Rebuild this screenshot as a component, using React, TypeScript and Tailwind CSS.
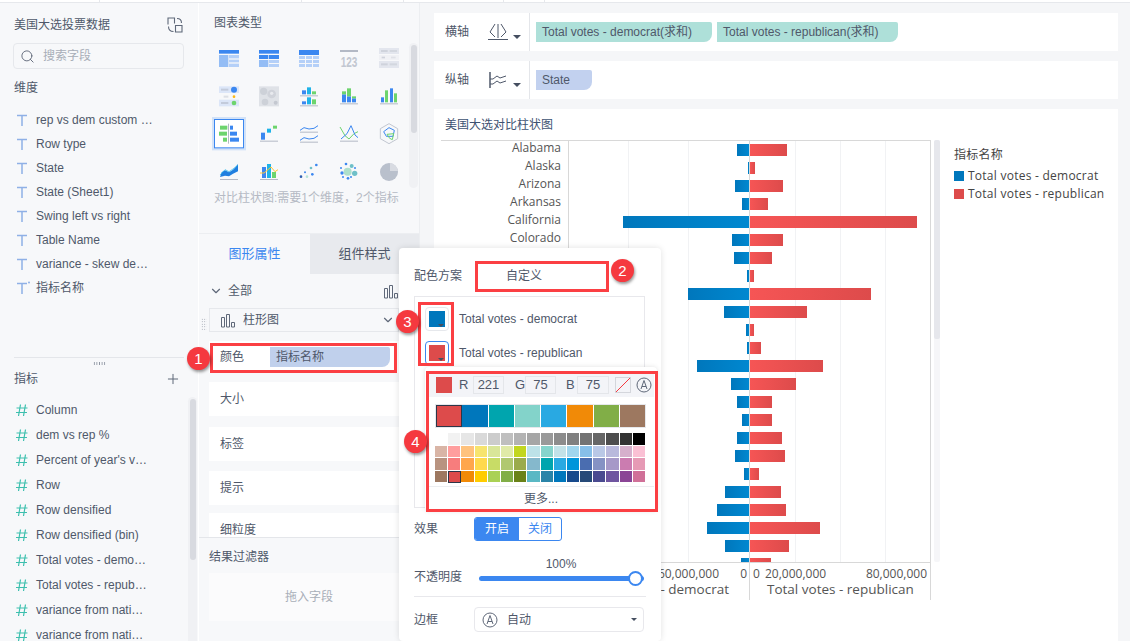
import { Search, Plus, ChevronDown } from 'lucide-react'

const dimensions = [
  'rep vs dem custom …',
  'Row type',
  'State',
  'State (Sheet1)',
  'Swing left vs right',
  'Table Name',
  'variance - skew de…',
  '指标名称',
]

const measures = [
  'Column',
  'dem vs rep %',
  "Percent of year's v…",
  'Row',
  'Row densified',
  'Row densified (bin)',
  'Total votes - demo…',
  'Total votes - repub…',
  'variance from nati…',
  'variance from nati…',
]

const states = ['Alabama', 'Alaska', 'Arizona', 'Arkansas', 'California', 'Colorado']

// left end / right end of each row, zero line sits at x=749
const bars = [
  [737, 787], [748, 755], [735, 783], [742, 768], [623, 917], [732, 783],
  [734, 772], [747, 754], [688, 871], [724, 807], [746, 754], [747, 761],
  [697, 823], [731, 796], [737, 772], [742, 772], [737, 782], [735, 785],
  [744, 759], [725, 781], [717, 786], [707, 820], [725, 789], [741, 771],
]

const bigSwatches = ['#dd4b4b', '#0077bc', '#00a5ae', '#83d3ca', '#29a9e2', '#f18a07', '#81ae47', '#9d7860']

const palette = [
  '#ffffff', '#f2f2f2', '#e6e6e6', '#d9d9d9', '#cccccc', '#bfbfbf', '#b3b3b3', '#a6a6a6', '#999999', '#8c8c8c', '#808080', '#737373', '#666666', '#4d4d4d', '#333333', '#000000',
  '#d9b5a6', '#ff9e9e', '#ffc27d', '#f7e46e', '#d9e699', '#e0eaa8', '#c2d61f', '#bde2e8', '#85d4cc', '#c2e2e8', '#a0d6ee', '#87bfe8', '#b9c8e6', '#b9b9dc', '#d6b0cc', '#fac0d4',
  '#b89380', '#f77d7d', '#ffa64d', '#ffd94d', '#c8dc66', '#b0c870', '#9bab4c', '#85b8cc', '#00a5ae', '#29a9e2', '#0095da', '#4a6db0', '#8592c4', '#a699c8', '#cb7cb0', '#e69ab5',
  '#9d7860', '#dd4b4b', '#f18a07', '#ffcc00', '#aad155', '#81ae47', '#6a8218', '#5ab8c4', '#2a84a8', '#0077bc', '#174a8c', '#264a78', '#4a4a90', '#6f55a0', '#8a4596', '#d07098',
]

const B = '#3b87f0'
const C = '#1fb3e8'
const G = '#6dd46d'
const L = '#b5d0f8'
const M = '#94bdf5'
const Y = '#b3b9c5'

function R({ x, y, w, h, f }: { x: number; y: number; w: number; h: number; f: string }) {
  return <rect x={x} y={y} width={w} height={h} fill={f} />
}

const thumbs = [
  <>
    <R x={30} y={30} w={60} h={11} f={B} />
    <R x={30} y={45} w={28} h={36} f={M} />
    <R x={60} y={45} w={30} h={10} f={L} />
    <R x={60} y={59} w={30} h={8} f={L} />
    <R x={60} y={71} w={30} h={10} f={L} />
  </>,
  <>
    <R x={30} y={30} w={60} h={11} f={B} />
    <R x={30} y={45} w={28} h={12} f={B} />
    <R x={60} y={45} w={30} h={12} f={B} />
    <R x={30} y={60} w={28} h={21} f={M} />
    <R x={60} y={60} w={30} h={9} f={L} />
    <R x={60} y={72} w={30} h={9} f={L} />
  </>,
  <>
    <R x={30} y={30} w={60} h={15} f={B} />
    {[48, 60, 72].map((y) => [30, 51, 72].map((x) => <R key={`${x}-${y}`} x={x} y={y} w={18} h={9} f={L} />))}
  </>,
  <>
    <R x={33} y={30} w={54} h={6} f={Y} />
    <text x={60} y={80} textAnchor="middle" fontSize={44} fontWeight={700} fill="#c2c7d1" textLength={50} lengthAdjust="spacingAndGlyphs" fontFamily="Liberation Sans">123</text>
  </>,
  <>
    <R x={30} y={24} w={60} h={18} f="#e3e6ee" />
    <R x={30} y={45} w={60} h={15} f="#f0f1f5" />
    <R x={30} y={63} w={60} h={21} f="#e3e6ee" />
    <R x={36} y={30} w={20} h={6} f="#cfd3dc" />
    <R x={62} y={30} w={22} h={6} f="#d3d7df" />
    <R x={38} y={50} w={10} h={5} f="#cfd3dc" />
    <R x={66} y={50} w={14} h={5} f="#dfe1e7" />
    <R x={36} y={70} w={20} h={6} f="#cfd3dc" />
    <R x={62} y={70} w={22} h={6} f="#d3d7df" />
  </>,
  <>
    <R x={30} y={25} w={60} h={20} f="#dce6f8" />
    <R x={30} y={65} w={60} h={20} f="#dce6f8" />
    <R x={36} y={32} w={22} h={6} f="#c3cbdb" />
    <R x={44} y={53} w={14} h={6} f="#dcdfe5" />
    <R x={36} y={72} w={22} h={6} f="#c3cbdb" />
    <circle cx={75} cy={35} r={9} fill={B} />
    <circle cx={75} cy={56} r={4} fill="#fdb913" />
    <circle cx={75} cy={75} r={7} fill={G} />
  </>,
  <>
    <R x={30} y={25} w={60} h={60} f="#dfe2e7" />
    <circle cx={44} cy={40} r={11} fill="#cdd1d8" />
    <circle cx={68} cy={48} r={13} fill="#d0d3da" />
    <circle cx={48} cy={72} r={10} fill="#cdd1d8" />
    <circle cx={80} cy={74} r={6} fill="#c4c8d0" />
    <circle cx={68} cy={46} r={5} fill="#e8eaee" />
  </>,
  <>
    <R x={39} y={37} w={12} h={12} f={B} />
    <R x={54} y={28} w={12} h={21} f={C} />
    <R x={69} y={40} w={12} h={9} f={G} />
    <R x={33} y={52} w={54} h={3} f={Y} />
    <R x={39} y={70} w={12} h={9} f={B} />
    <R x={54} y={58} w={12} h={21} f={C} />
    <R x={69} y={64} w={12} h={15} f={G} />
    <R x={33} y={82} w={54} h={3} f={Y} />
  </>,
  <>
    <R x={39} y={49} w={12} h={24} f={B} />
    <R x={39} y={40} w={12} h={9} f={G} />
    <R x={54} y={55} w={12} h={18} f={B} />
    <R x={54} y={31} w={12} h={24} f={G} />
    <R x={69} y={61} w={12} h={12} f={B} />
    <R x={69} y={55} w={12} h={6} f={G} />
    <R x={33} y={76} w={54} h={3} f={Y} />
  </>,
  <>
    <R x={36} y={58} w={9} h={15} f={B} />
    <R x={48} y={37} w={9} h={36} f={G} />
    <R x={63} y={31} w={9} h={42} f={B} />
    <R x={75} y={46} w={9} h={27} f={G} />
    <R x={33} y={76} w={54} h={3} f={Y} />
  </>,
  <>
    <rect x={9} y={6} width={102} height={100} fill="#d2e2f8" />
    <rect x={16.5} y={13.5} width={87} height={85} fill="#fff" stroke={B} strokeWidth={3} />
    <R x={33} y={32} w={22} h={12} f={G} />
    <R x={30} y={50} w={24} h={12} f={G} />
    <R x={42} y={68} w={12} h={12} f={G} />
    <R x={57} y={26} w={3} h={60} f={Y} />
    <R x={63} y={32} w={9} h={12} f={B} />
    <R x={63} y={50} w={21} h={12} f={B} />
    <R x={63} y={68} w={27} h={12} f={B} />
  </>,
  <>
    <R x={36} y={53} w={12} h={21} f={B} />
    <R x={54} y={41} w={12} h={12} f={C} />
    <R x={72} y={32} w={12} h={9} f={G} />
    <R x={33} y={77} w={54} h={3} f={Y} />
  </>,
  <>
    <polyline points="33,46 45,38 60,42 75,40 87,32" fill="none" stroke={B} strokeWidth={3} />
    <R x={33} y={50} w={54} h={3} f={Y} />
    <polyline points="33,76 45,68 60,72 75,70 87,62" fill="none" stroke={B} strokeWidth={3} />
    <R x={33} y={80} w={54} h={3} f={Y} />
  </>,
  <>
    <polyline points="33,36 48,62 60,72 75,56 87,50" fill="none" stroke={G} strokeWidth={3} />
    <polyline points="36,72 54,56 66,32 78,60 87,68" fill="none" stroke={B} strokeWidth={3} />
    <R x={33} y={77} w={54} h={3} f={Y} />
  </>,
  <>
    <polygon points="60,26 86,41 86,71 60,86 34,71 34,41" fill="none" stroke="#c2c7d1" strokeWidth={3} />
    <polygon points="44,50 60,38 76,46 72,64 52,64" fill="none" stroke={B} strokeWidth={3} />
    <polygon points="54,58 74,56 70,74 62,70" fill="none" stroke={G} strokeWidth={3} />
  </>,
  <>
    <path d="M33 72 L38 58 L48 52 L60 58 L72 50 L78 44 L87 33 L87 55 L72 62 L60 70 L48 68 Z" fill="#1f7fe0" />
    <polyline points="33,66 48,50 60,56 72,48 87,36" fill="none" stroke={C} strokeWidth={2} />
    <R x={33} y={78} w={54} h={3} f={Y} />
  </>,
  <>
    <R x={39} y={42} w={12} h={33} f={B} />
    <R x={54} y={33} w={12} h={42} f={C} />
    <R x={69} y={57} w={12} h={18} f={G} />
    <polyline points="33,60 45,60 57,50 66,42 78,56 87,50" fill="none" stroke="#fdc633" strokeWidth={3} />
    <R x={33} y={78} w={54} h={3} f={Y} />
  </>,
  <>
    <circle cx={36} cy={71} r={4} fill="#2f5fb0" />
    <circle cx={48} cy={58} r={3} fill="#3b87f0" />
    <circle cx={54} cy={71} r={4} fill="#b7e4d8" />
    <circle cx={66} cy={45} r={4} fill="#6fc0c8" />
    <circle cx={70} cy={64} r={4} fill="#3b87f0" />
    <circle cx={82} cy={36} r={4} fill="#3b87f0" />
  </>,
  <>
    <circle cx={56} cy={56} r={12} fill="#aee0cc" />
    <circle cx={77} cy={61} r={8} fill="#6fc0c8" />
    <circle cx={68} cy={39} r={6} fill="#6fc0c8" />
    <circle cx={51} cy={33} r={4} fill={B} />
    <circle cx={36} cy={45} r={3} fill={B} />
    <circle cx={39} cy={60} r={5} fill={B} />
    <circle cx={42} cy={72} r={3} fill={B} />
    <circle cx={57} cy={76} r={4} fill={B} />
    <circle cx={66} cy={72} r={3} fill={B} />
    <circle cx={78} cy={45} r={3} fill={B} />
  </>,
  <>
    <circle cx={60} cy={57} r={27} fill="#b9c0cc" />
    <path d="M63 30 A27 27 0 0 1 87 54 L63 54 Z" fill="#d8dbe2" />
  </>,
]

function TIcon({ star }: { star?: boolean }) {
  return (
    <svg width="14" height="14" viewBox="0 0 14 14" className="shrink-0">
      <path d="M1 2.500h10M6 2.500V13" fill="none" stroke="#8fb0e6" strokeWidth="1.500" />
      {star && <circle cx="13" cy="1.500" r="1" fill="#8fb0e6" />}
    </svg>
  )
}

function HashIcon() {
  return (
    <svg width="14" height="14" viewBox="0 0 14 14" className="shrink-0">
      <path d="M4.500 1.500 2.500 13M9.500 1.500 7.500 13M.5 5h11M0 9.500h11" fill="none" stroke="#3dbfae" strokeWidth="1.200" />
    </svg>
  )
}

function BarsIcon({ className }: { className?: string }) {
  return (
    <svg width="15" height="15" viewBox="0 0 15 15" className={className}>
      <path d="M1.500 4.500h3v9.500h-3zM6.500 1.500h3v12.500h-3zM11.500 9.500h3v4.500h-3z" fill="none" stroke="#5f6879" strokeWidth="1" />
    </svg>
  )
}

function AutoIcon({ size }: { size: number }) {
  return (
    <svg width={size} height={size} viewBox="0 0 16 16" className="shrink-0">
      <circle cx="8" cy="8" r="7" fill="none" stroke="#5f6879" strokeWidth="1" />
      <path d="M5 12 8 3.500 11 12M6 9.500h4" fill="none" stroke="#5f6879" strokeWidth="1" />
    </svg>
  )
}

function Caret() {
  return <span className="inline-block h-0 w-0 border-x-[4px] border-t-[4px] border-x-transparent border-t-[#454e60]" />
}

function SmallCaret() {
  return <span className="h-0 w-0 border-x-[3px] border-t-[3px] border-x-transparent border-t-[#454e60]" />
}

function Badge({ n, className }: { n: number; className: string }) {
  return (
    <div className={`absolute z-30 flex h-[23px] w-[23px] items-center justify-center rounded-full bg-[#f5393f] text-[15px] text-white shadow-[1px_2px_3px_rgba(0,0,0,0.4)] ${className}`}>
      {n}
    </div>
  )
}

function PropRow({ label, className }: { label: string; className: string }) {
  return (
    <div className={`flex w-[190px] items-center bg-white pl-[11px] ${className}`}>
      <span>{label}</span>
    </div>
  )
}

function Chart() {
  return (
    <svg width="500" height="470" viewBox="441 140 500 470" className="shrink-0" fontFamily="'Open Sans','Noto Sans',sans-serif">
      <defs>
        <linearGradient id="blue" x1="0" x2="1" y1="0" y2="0">
          <stop offset="0" stopColor="#0077bc" />
          <stop offset="1" stopColor="#0088d0" />
        </linearGradient>
        <linearGradient id="red" x1="0" x2="1" y1="0" y2="0">
          <stop offset="0" stopColor="#f65555" />
          <stop offset="1" stopColor="#dd4b4b" />
        </linearGradient>
      </defs>
      {[628, 688, 795, 840, 885].map((x) => (
        <line key={x} x1={x + 0.5} x2={x + 0.5} y1={140} y2={562} stroke="#f1f2f4" />
      ))}
      <line x1={441} x2={931} y1={140.5} y2={140.5} stroke="#d8d8d8" />
      <line x1={568.5} x2={568.5} y1={140} y2={562} stroke="#d8d8d8" />
      {bars.map(([l, r], i) => {
        const y = 144 + i * 18
        const h = Math.min(12, 562 - y)
        return (
          <g key={i}>
            <rect x={l} y={y} width={749 - l} height={h} fill="url(#blue)" />
            <rect x={750} y={y} width={r - 750} height={h} fill="url(#red)" />
          </g>
        )
      })}
      {states.map((s, i) => (
        <text key={s} x={561} y={152 + i * 18} textAnchor="end" fontSize={12} fill="#555">{s}</text>
      ))}
      <line x1={749.5} x2={749.5} y1={140} y2={600} stroke="#d8d8d8" />
      <line x1={930.5} x2={930.5} y1={140} y2={600} stroke="#d8d8d8" />
      <line x1={568} x2={931} y1={562.5} y2={562.5} stroke="#d8d8d8" />
      <g fontSize={12} fill="#555">
        <text x={719} y={578} textAnchor="end">60,000,000</text>
        <text x={747} y={578} textAnchor="end">0</text>
        <text x={753} y={578}>0</text>
        <text x={765} y={578}>20,000,000</text>
        <text x={927} y={578} textAnchor="end">80,000,000</text>
      </g>
      <g fontSize={13.500} fill="#555">
        <text x={729} y={594} textAnchor="end">Total votes - democrat</text>
        <text x={767} y={594}>Total votes - republican</text>
      </g>
      <rect x={934} y={140} width={6} height={422} rx={2} fill="#f6f6f8" />
      <rect x={934} y={140} width={6} height={199} rx={2} fill="#e6e7ec" />
    </svg>
  )
}

export default function App() {
  return (
    <div className="relative flex h-[641px] w-[1130px] flex-col overflow-hidden bg-[#f5f6f8] font-['Liberation_Sans','Noto_Sans_CJK_SC',sans-serif] text-xs text-[#4f586a]">
      <div className="flex h-[3px] shrink-0 border-b border-[#e6e8ec] bg-white">
        <div className="w-[100px] border-r border-[#e6e8ec]" />
        <div className="w-[202px] border-r border-[#e6e8ec]" />
        <div className="w-[102px] border-r border-[#e6e8ec]" />
        <div className="w-[100px] border-r border-[#e6e8ec]" />
        <div className="w-[41px] border-r border-[#e6e8ec]" />
      </div>

      <div className="flex min-h-0 flex-1">
        {/* field list */}
        <aside className="flex w-[199px] shrink-0 flex-col border-r border-white bg-[#f7f8fa] pt-[11px]">
          <div className="mt-[1px] flex h-5 items-center justify-between pl-[14px] pr-[15px]">
            <span>美国大选投票数据</span>
            <svg width="16" height="16" viewBox="0 0 16 16">
              <path d="M1 7.500V1h6.500v5.500M8.500 8.500h6.500v6.500h-6.500zM10 1.500c3 0 4.500 1.500 4.500 4.500M1.500 9.500c0 3 1.500 5 5 5" fill="none" stroke="#5f6879" strokeWidth="1.100" />
            </svg>
          </div>
          <div className="ml-[13px] mt-[8px] flex h-[26px] w-[171px] items-center gap-2 rounded-sm border border-[#e6e8ec] pl-[6px] text-[#a8aeb8]">
            <Search size={15} color="#5f6879" strokeWidth={1.500} />
            <span>搜索字段</span>
          </div>
          <div className="ml-[14px] mt-[9px] flex h-5 items-center">维度</div>
          <ul className="mt-[10px]">
            {dimensions.map((d, i) => (
              <li key={d} className="flex h-6 items-center gap-[6px] pl-[16px]">
                <TIcon star={i === dimensions.length - 1} />
                <span>{d}</span>
              </li>
            ))}
          </ul>
          <div className="mx-[14px] mt-[57px] border-t border-[#e4e6ea]" />
          <div className="flex h-[11px] items-center justify-center">
            <span className="h-[3px] w-[13px] bg-[radial-gradient(#8c93a0_0.7px,transparent_0.8px)] bg-[length:2.600px_1.500px]" />
          </div>
          <div className="flex h-5 items-center justify-between pl-[14px] pr-[17px]">
            <span>指标</span>
            <Plus size={16} color="#5f6879" strokeWidth={1.500} />
          </div>
          <div className="mt-[8px] flex min-h-0 flex-1">
            <ul className="flex-1">
              {measures.map((m) => (
                <li key={m} className="flex h-[25px] items-center gap-[6px] pl-[16px]">
                  <HashIcon />
                  <span>{m}</span>
                </li>
              ))}
            </ul>
            <div className="mr-[1px] w-[9px] rounded-t-md bg-[#f0f1f4] px-[1.500px] pt-[2px]">
              <div className="h-[161px] rounded-[3px] bg-[#d8dae0]" />
            </div>
          </div>
        </aside>

        {/* chart type + properties */}
        <section className="flex w-[221px] shrink-0 flex-col border-r border-[#eceef1] bg-[#f7f8fa]">
          <div className="relative h-[231px] shrink-0 border-b border-[#eceef1] pl-[10px] pt-[10px]">
            <div className="ml-[5px] flex h-5 items-center">图表类型</div>
            <div className="mt-[7px] grid w-[200px] grid-cols-5 [grid-auto-rows:37.700px]">
              {thumbs.map((t, i) => (
                <svg key={i} width="40" height="38" viewBox="0 0 120 114">{t}</svg>
              ))}
            </div>
            <p className="ml-[5px] mt-[-1px] text-[#b5bac4]">对比柱状图:需要1个维度，2个指标</p>
            <div className="absolute left-[210px] top-[40px] h-[145px] w-[9px] rounded-md bg-[#f0f1f4] px-[1.500px] pt-[2px]">
              <div className="h-[88px] rounded-[3px] bg-[#d8dae0]" />
            </div>
          </div>

          <div className="flex h-[40px] shrink-0 items-center text-[13px]">
            <div className="flex h-full w-[111px] items-center justify-center text-[#3b87f0]">图形属性</div>
            <div className="flex h-full flex-1 items-center justify-center bg-[#e8eaee]">组件样式</div>
          </div>

          <div className="min-h-0 flex-1 overflow-hidden pl-[10px]">
            <div className="mt-[8px] flex h-[18px] items-center justify-between pr-[21px]">
              <span className="flex items-center gap-[5px]">
                <ChevronDown size={14} color="#5f6879" />
                全部
              </span>
              <BarsIcon />
            </div>
            <div className="relative mt-[8px] flex h-[24px] w-[190px] items-center gap-[8px] border border-[#e6e8ec] pl-[10px]">
              <span className="absolute left-[-9px] top-[9px] h-[13px] w-[6px] bg-[radial-gradient(#8c93a0_0.7px,transparent_0.8px)] bg-[length:2.500px_2.500px]" />
              <BarsIcon />
              <span>柱形图</span>
              <ChevronDown size={14} color="#5f6879" className="absolute right-[3px] top-[4px]" />
            </div>
            <div className="mt-[9px] flex h-[32px] w-[190px] items-center bg-white pl-[11px]">
              <span>颜色</span>
              <span className="ml-[26px] flex h-5 w-[120px] items-center rounded-br-[8px] rounded-tr-[2px] bg-[#c0d0ec] pl-[6px]">指标名称</span>
            </div>
            <PropRow label="大小" className="mt-[9px] h-[34px]" />
            <PropRow label="标签" className="mt-[11px] h-[34px]" />
            <PropRow label="提示" className="mt-[10px] h-[34px]" />
            <PropRow label="细粒度" className="mt-[8px] h-[34px]" />
          </div>

          <div className="h-[104px] shrink-0 border-t border-[#e4e6ea] pl-[10px]">
            <div className="mt-[9px] flex h-5 items-center">结果过滤器</div>
            <div className="mt-[6px] flex h-[48px] w-[200px] items-center justify-center bg-[#fbfbfc] text-[#a8aeb8]">拖入字段</div>
          </div>
        </section>

        {/* axes + chart */}
        <main className="flex min-w-0 flex-1 flex-col gap-[10px] pl-[14px] pr-[12px] pt-[10px]">
          <div className="flex h-[38px] shrink-0 items-center bg-white pl-[11px]">
            <span className="w-[43px]">横轴</span>
            <svg width="20" height="20" viewBox="0 0 20 20">
              <path d="M0 17.500h20M7 2 2 10l5 5M10 2v14M13 2l5 8-5 5" fill="none" stroke="#4f586a" strokeWidth="1" />
            </svg>
            <span className="ml-[5px] mt-[10px] flex"><Caret /></span>
            <div className="ml-[8px] mr-[6px] h-[38px] border-l border-[#e4e6ea]" />
            <span className="flex h-5 items-center rounded-br-[8px] rounded-tr-[2px] bg-[#aee0d9] pl-[6px] pr-[20px]">Total votes - democrat(求和)</span>
            <span className="ml-[5px] flex h-5 items-center rounded-br-[8px] rounded-tr-[2px] bg-[#aee0d9] pl-[6px] pr-[20px]">Total votes - republican(求和)</span>
          </div>
          <div className="flex h-[38px] shrink-0 items-center bg-white pl-[11px]">
            <span className="w-[43px]">纵轴</span>
            <svg width="20" height="20" viewBox="0 0 20 20">
              <path d="M2 2v16" fill="none" stroke="#4f586a" strokeWidth="1.500" />
              <path d="M2 9h3l4-3 3 2 6-2M2 14h3l4-3 3 2 6-2" fill="none" stroke="#4f586a" strokeWidth="1" />
            </svg>
            <span className="ml-[5px] mt-[10px] flex"><Caret /></span>
            <div className="ml-[8px] mr-[6px] h-[38px] border-l border-[#e4e6ea]" />
            <span className="flex h-5 w-[56px] items-center rounded-br-[8px] rounded-tr-[2px] bg-[#c2d1ef] pl-[6px]">State</span>
          </div>
          <div className="min-h-0 flex-1 bg-white">
            <div className="flex h-[31px] items-center pl-[11px] text-[#3d5272]">美国大选对比柱状图</div>
            <div className="flex pl-[7px]">
              <Chart />
              <div className="ml-[13px] pt-[5px] font-['Open_Sans','Noto_Sans_CJK_SC',sans-serif] tracking-[0.25px] text-[#444]">
                <div className="flex h-5 items-center">指标名称</div>
                <div className="mt-[2px] flex h-[18px] items-center gap-[4px]">
                  <span className="h-[10px] w-[10px] bg-[#0077bc]" />
                  Total votes - democrat
                </div>
                <div className="flex h-[18px] items-center gap-[4px]">
                  <span className="h-[10px] w-[10px] bg-[#dd4b4b]" />
                  Total votes - republican
                </div>
              </div>
            </div>
          </div>
        </main>
      </div>

      {/* colour popup */}
      <div className="absolute left-[399px] top-[248px] z-10 h-[393px] w-[262px] rounded-sm bg-white pl-[15px] pt-[18px] shadow-[0_0_6px_rgba(0,0,0,0.12)]">
        <div className="flex h-5 items-center">
          <span className="w-[92px]">配色方案</span>
          <span>自定义</span>
        </div>
        <div className="mt-[10px] h-[212px] w-[231px] border border-[#e8e8ec] pl-[10px] pt-[10px]">
          <div className="flex h-[24px] items-center gap-[10px]">
            <span className="relative flex h-[24px] w-[24px] items-center justify-center rounded-sm border border-[#e6e8ec]">
              <span className="h-4 w-4 bg-[#0077bc]" />
              <span className="absolute bottom-[3px] right-[4px] flex"><SmallCaret /></span>
            </span>
            Total votes - democrat
          </div>
          <div className="mt-[10px] flex h-[24px] items-center gap-[10px]">
            <span className="relative flex h-[24px] w-[24px] items-center justify-center rounded-sm border border-[#3b87f0]">
              <span className="h-4 w-4 bg-[#dd4b4b]" />
              <span className="absolute bottom-[3px] right-[4px] flex"><SmallCaret /></span>
            </span>
            Total votes - republican
          </div>
        </div>

        <div className="mt-[9px] flex h-[24px] items-center">
          <span className="w-[60px]">效果</span>
          <div className="flex h-[24px] w-[88px] overflow-hidden rounded-[3px] border border-[#3b87f0]">
            <span className="flex w-[44px] items-center justify-center bg-[#3b87f0] text-white">开启</span>
            <span className="flex flex-1 items-center justify-center text-[#3b87f0]">关闭</span>
          </div>
        </div>
        <div className="mt-[16px] flex h-[24px] items-start">
          <span className="mt-[13px] w-[65px] leading-[14px]">不透明度</span>
          <div className="relative flex h-[24px] w-[165px] flex-col items-center">
            <span className="ml-[-1px] leading-[14px]">100%</span>
            <div className="absolute left-0 top-[18.500px] h-[5px] w-full rounded-full bg-[#3b87f0]" />
            <div className="absolute right-[1px] top-[13.500px] h-[15px] w-[15px] rounded-full border-2 border-[#3b87f0] bg-white" />
          </div>
        </div>
        <div className="mt-[15px] w-[232px] border-t border-[#e8e8ec]" />
        <div className="mt-[10px] flex h-[25px] items-center">
          <span className="w-[60px]">边框</span>
          <div className="flex h-[25px] w-[170px] items-center gap-[9px] rounded-sm border border-[#e8e8ec] pl-[7px] pr-[6px]">
            <AutoIcon size={16} />
            <span className="flex-1 whitespace-nowrap">自动</span>
            <SmallCaret />
          </div>
        </div>

        {/* colour picker */}
        <div className="absolute left-[26px] top-[119px] z-20 h-[144px] w-[232px] rounded-sm bg-white shadow-[0_0_5px_rgba(0,0,0,0.12)]">
          <div className="mx-[3px] mt-[5px] flex h-[25px] items-center bg-[#f3f4f8] pl-[8px] text-[13px]">
            <span className="h-4 w-4 bg-[#dd4b4b]" />
            <span className="ml-[7px] w-[14px]">R</span>
            <span className="flex h-[18px] w-[31px] items-center justify-center border border-[#e4e6ea]">221</span>
            <span className="ml-[11px] w-[10px]">G</span>
            <span className="flex h-[18px] w-[31px] items-center justify-center border border-[#e4e6ea]">75</span>
            <span className="ml-[10px] w-[11px]">B</span>
            <span className="flex h-[18px] w-[32px] items-center justify-center border border-[#e4e6ea]">75</span>
            <svg width="16" height="16" viewBox="0 0 16 16" className="ml-[6px]">
              <rect x="0.5" y="0.5" width="15" height="15" fill="none" stroke="#d4d6dc" />
              <line x1="1" y1="15" x2="15" y2="1" stroke="#f5393f" />
            </svg>
            <span className="ml-[5px] flex"><AutoIcon size={16} /></span>
          </div>
          <div className="ml-[10px] mt-[7px] flex h-[24px] w-[211px] border border-[#e6e8ec]">
            {bigSwatches.map((c, i) => (
              <span key={i} className={`h-full flex-1 border-r border-white last:border-r-0 ${i === 0 ? 'outline outline-[1px] -outline-offset-1 outline-[#2d3648]' : ''}`} style={{ backgroundColor: c }} />
            ))}
          </div>
          <div className="ml-[10px] mt-[5px] grid w-[211px] grid-cols-16">
            {palette.map((c, i) => (
              <span key={i} className={`h-[12.600px] border-b border-r border-white ${i === 49 ? 'outline outline-[1px] -outline-offset-1 outline-[#2d3648]' : ''}`} style={{ backgroundColor: c }} />
            ))}
          </div>
          <div className="mx-[3px] mt-[3px] flex h-[24px] items-center justify-center border-t border-[#eceef1]">更多...</div>
        </div>
      </div>

      {/* red call-outs */}
      <div className="absolute left-[210px] top-[343px] z-30 h-[30px] w-[187px] border-[3px] border-[#fb3f43]" />
      <div className="absolute left-[475px] top-[261px] z-30 h-[31px] w-[134px] border-[3px] border-[#fb3f43]" />
      <div className="absolute left-[418px] top-[302px] z-30 h-[64px] w-[36px] border-[3px] border-[#fb3f43]" />
      <div className="absolute left-[426px] top-[371px] z-30 h-[141px] w-[232px] border-[3px] border-[#fb3f43]" />
      <Badge n={1} className="left-[187px] top-[347px]" />
      <Badge n={2} className="left-[611px] top-[259px]" />
      <Badge n={3} className="left-[396px] top-[310px]" />
      <Badge n={4} className="left-[404px] top-[430px]" />
    </div>
  )
}
